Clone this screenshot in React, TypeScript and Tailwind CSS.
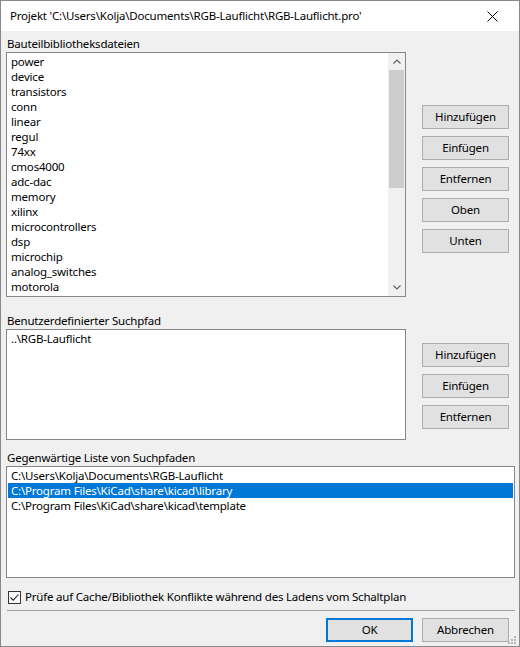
import React from "react";

const font = { fontFamily: '"Segoe UI", "Noto Sans", "Liberation Sans", sans-serif' };

const libs = [
  "power","device","transistors","conn","linear","regul","74xx","cmos4000","adc-dac","memory","xilinx","microcontrollers","dsp","microchip","analog_switches","motorola","texas",
];

function Btn({ children, def = false }: { children: React.ReactNode; def?: boolean }) {
  return (
    <div
      className={
        "h-[24px] w-[87px] flex items-center justify-center bg-[#e1e1e1] text-black " +
        (def ? "border-2 border-[#0078d7]" : "border border-[#adadad]")
      }
    >
      {children}
    </div>
  );
}

function Row({ children, sel = false }: { children: React.ReactNode; sel?: boolean }) {
  return (
    <div
      className={
        "h-[15px] leading-[15px] pl-[3px] whitespace-nowrap " +
        (sel ? "bg-[#0078d7] text-white" : "text-black")
      }
    >
      {children}
    </div>
  );
}

export default function App() {
  return (
    <div
      style={font}
      className="w-[520px] h-[647px] border border-[#888888] bg-[#f0f0f0] flex flex-col text-[11.5px] tracking-[-0.2px] text-black overflow-hidden"
    >
      {/* title bar */}
      <div className="h-[30px] bg-white flex items-center justify-between shrink-0">
        <span className="pl-[9px] leading-[16px]">Projekt 'C:\Users\Kolja\Documents\RGB-Lauflicht\RGB-Lauflicht.pro'</span>
        <svg width="11" height="11" viewBox="0 0 11 11" className="mr-[21px]">
          <path d="M0.5 0.5 L10.5 10.5 M10.5 0.5 L0.5 10.5" stroke="#000" strokeWidth="1" />
        </svg>
      </div>

      <div className="flex flex-col pl-[5px]">
        <div className="mt-[5px] h-[16px] leading-[16px] pl-[1px]">Bauteilbibliotheksdateien</div>
        <div className="flex">
          <div className="w-[400px] h-[245px] border border-[#828790] bg-white flex overflow-hidden">
            <div className="flex-1 pt-[1px] px-[1px] overflow-hidden">
              {libs.map((l) => (
                <Row key={l}>{l}</Row>
              ))}
            </div>
            <div className="w-[17px] bg-[#f0f0f0] flex flex-col">
              <div className="h-[17px] flex items-center justify-center">
                <svg width="8" height="5" viewBox="0 0 8 5">
                  <path d="M0.5 4.5 L4 1 L7.5 4.5" stroke="#606060" strokeWidth="1.2" fill="none" />
                </svg>
              </div>
              <div className="h-[118px] bg-[#cdcdcd] mx-[1px]" />
              <div className="flex-1" />
              <div className="h-[17px] flex items-center justify-center">
                <svg width="8" height="5" viewBox="0 0 8 5">
                  <path d="M0.5 0.5 L4 4 L7.5 0.5" stroke="#606060" strokeWidth="1.2" fill="none" />
                </svg>
              </div>
            </div>
          </div>
          <div className="ml-[16px] mt-[53px] flex flex-col gap-[7px]">
            <Btn>Hinzufügen</Btn>
            <Btn>Einfügen</Btn>
            <Btn>Entfernen</Btn>
            <Btn>Oben</Btn>
            <Btn>Unten</Btn>
          </div>
        </div>

        <div className="mt-[16px] h-[16px] leading-[16px] pl-[1px]">Benutzerdefinierter Suchpfad</div>
        <div className="flex">
          <div className="w-[400px] h-[111px] border border-[#828790] bg-white pt-[1px] px-[1px]">
            <Row>..\RGB-Lauflicht</Row>
          </div>
          <div className="ml-[16px] mt-[14px] flex flex-col gap-[7px]">
            <Btn>Hinzufügen</Btn>
            <Btn>Einfügen</Btn>
            <Btn>Entfernen</Btn>
          </div>
        </div>

        <div className="mt-[10px] h-[16px] leading-[16px] pl-[1px]">Gegenwärtige Liste von Suchpfaden</div>
        <div className="w-[509px] h-[112px] border border-[#828790] bg-white pt-[1px] px-[1px]">
          <Row>C:\Users\Kolja\Documents\RGB-Lauflicht</Row>
          <Row sel>C:\Program Files\KiCad\share\kicad\library</Row>
          <Row>C:\Program Files\KiCad\share\kicad\template</Row>
        </div>

        <div className="mt-[11px] flex items-center h-[16px] pl-[2px]">
          <div className="w-[13px] h-[13px] border border-[#333333] bg-white flex items-center justify-center">
            <svg width="11" height="11" viewBox="0 0 11 11">
              <path d="M1.5 5.5 L4.2 8.2 L9.5 2.5" stroke="#222" strokeWidth="1.1" fill="none" />
            </svg>
          </div>
          <span className="ml-[4px] leading-[16px]">Prüfe auf Cache/Bibliothek Konflikte während des Ladens vom Schaltplan</span>
        </div>

        <div className="mt-[5px] w-[508px] ml-[1px] h-px bg-[#a0a0a0]" />

        <div className="mt-[7px] flex justify-end gap-[9px] pr-[10px]">
          <Btn def>OK</Btn>
          <Btn>Abbrechen</Btn>
        </div>
      </div>
      <div className="flex-1 relative">
        <svg width="10" height="10" viewBox="0 0 10 10" className="absolute right-[2px] bottom-[1px]">
          <rect x="7" y="1" width="2" height="2" fill="#b8b8b8" />
          <rect x="4" y="4" width="2" height="2" fill="#b8b8b8" />
          <rect x="7" y="4" width="2" height="2" fill="#b8b8b8" />
          <rect x="1" y="7" width="2" height="2" fill="#b8b8b8" />
          <rect x="4" y="7" width="2" height="2" fill="#b8b8b8" />
          <rect x="7" y="7" width="2" height="2" fill="#b8b8b8" />
        </svg>
      </div>
    </div>
  );
}
